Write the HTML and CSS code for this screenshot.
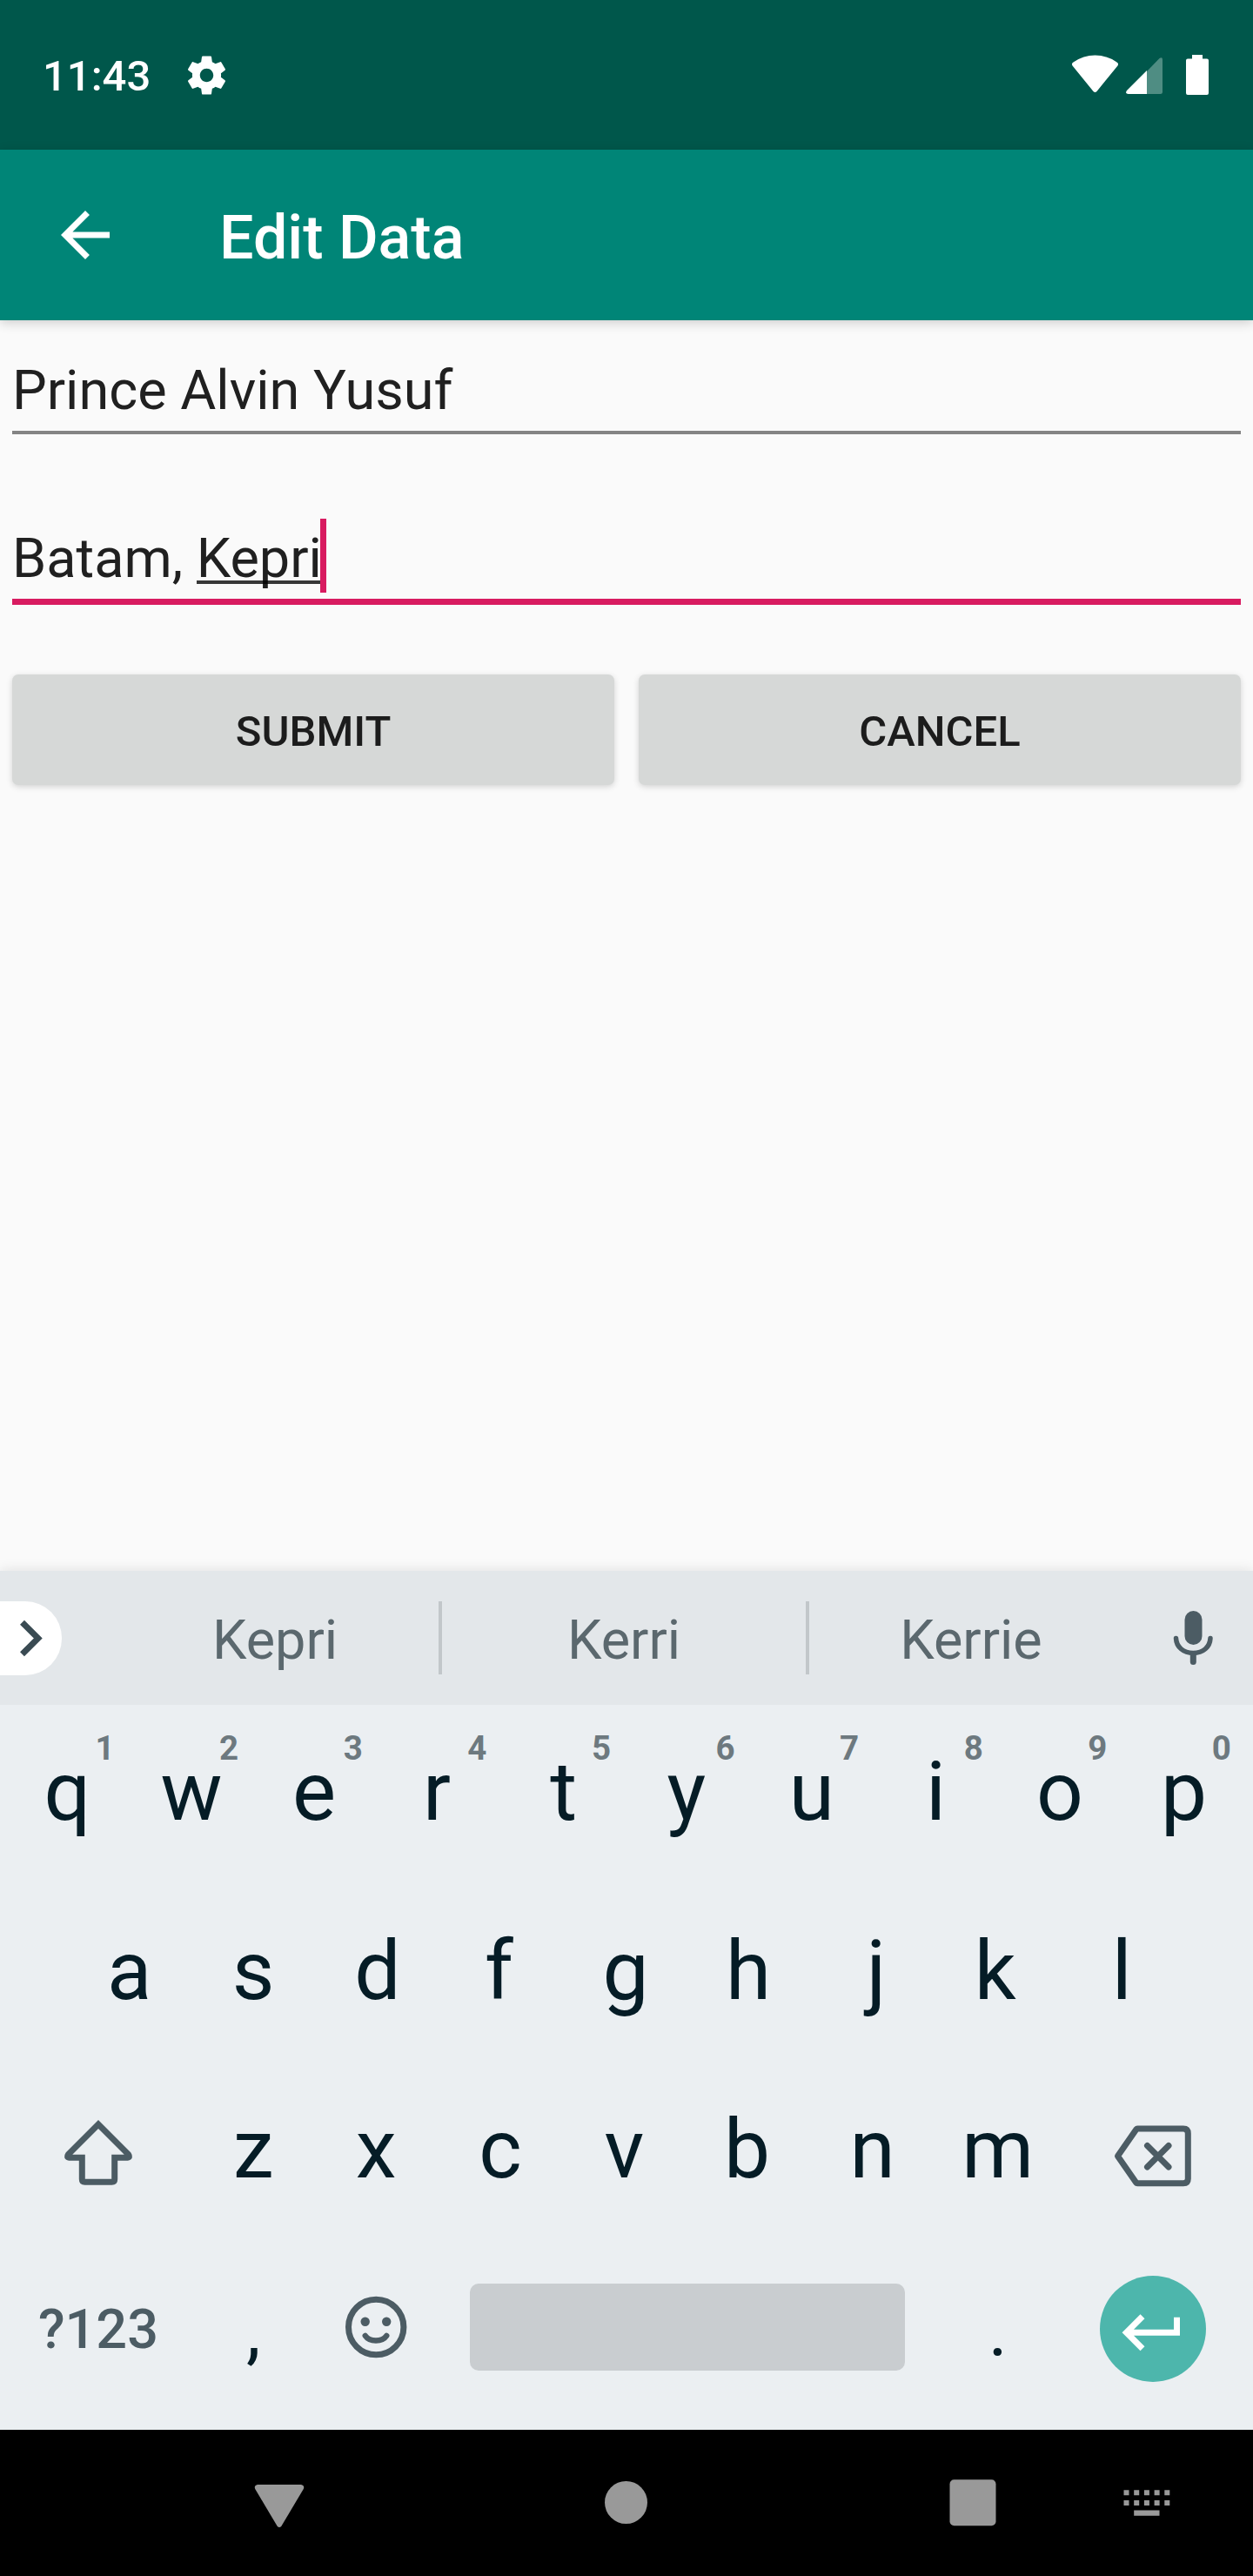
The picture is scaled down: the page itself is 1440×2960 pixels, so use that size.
FILE: index.html
```html
<!DOCTYPE html>
<html lang="en">
<head>
<meta charset="utf-8">
<title>Edit Data</title>
<link rel="stylesheet" href="styles.css">
</head>
<body>
<div class="screen">
  <header class="status">
    <span class="clock">11:43</span>
    <svg class="gear" width="53" height="53" viewBox="0 0 24 24"><path fill="#fff" d="M19.43 12.98c.04-.32.07-.64.07-.98s-.03-.66-.07-.98l2.11-1.65c.19-.15.24-.42.12-.64l-2-3.46c-.12-.22-.39-.3-.61-.22l-2.49 1c-.52-.4-1.08-.73-1.69-.98l-.38-2.65C14.46 2.18 14.25 2 14 2h-4c-.25 0-.46.18-.49.42l-.38 2.65c-.61.25-1.17.59-1.69.98l-2.49-1c-.23-.09-.49 0-.61.22l-2 3.46c-.13.22-.07.49.12.64l2.11 1.65c-.04.32-.07.65-.07.98s.03.66.07.98l-2.11 1.65c-.19.15-.24.42-.12.64l2 3.46c.12.22.39.3.61.22l2.49-1c.52.4 1.08.73 1.69.98l.38 2.65c.03.24.24.42.49.42h4c.25 0 .46-.18.49-.42l.38-2.65c.61-.25 1.17-.59 1.69-.98l2.49 1c.23.09.49 0 .61-.22l2-3.46c.12-.22.07-.49-.12-.64l-2.11-1.65zM12 15.5c-1.93 0-3.5-1.57-3.5-3.5s1.57-3.5 3.5-3.5 3.5 1.57 3.5 3.5-1.57 3.5-3.5 3.5z"/></svg>
    <svg class="system" width="160" height="48" viewBox="1231 62 160 48">
      <path fill="#fff" d="M1232.5 75.5Q1231 73 1233.5 71.500Q1245 63.5 1258.5 63.5T1283.5 71.5Q1286 73 1284.5 75.5L1260.500 105Q1258.500 107 1256.500 105Z"/>
      <path fill="#4f8d83" d="M1318 82l14.500-15q3.500-2 3.500 1.500v37q0 2.500-2.500 2.500H1318z"/>
      <path fill="#fff" d="M1318 81v27h-21.500q-4-.5-1.500-4z"/>
      <path fill="#fff" d="M1370 63h12v4.500h5q2 0 2 2V107q0 2-2 2h-22q-2 0-2-2V69.500q0-2 2-2h5z"/>
    </svg>
  </header>
  <div class="appbar">
    <svg width="84" height="84" viewBox="0 0 24 24"><path fill="#fff" d="M20 11H7.830l5.590-5.590L12 4l-8 8 8 8 1.410-1.410L7.830 13H20v-2z"/></svg>
    <h1 class="title">Edit Data</h1>
  </div>
  <main class="form">
    <div class="field">Prince Alvin Yusuf</div>
    <div class="field focused">Batam,&nbsp;<span class="composing">Kepri</span></div>
    <div class="actions">
      <button class="btn">SUBMIT</button>
      <button class="btn">CANCEL</button>
    </div>
  </main>
  <section class="keyboard">
    <div class="suggestions">
      <div class="expand"><svg width="71" height="85" viewBox="0 1839 71 85"><path fill="none" stroke="#3a4b53" stroke-width="7" d="M25.500 1863.200L43.800 1881.500 25.500 1899.800"/></svg></div>
      <span class="word first">Kepri</span>
      <span class="word middle">Kerri</span>
      <span class="word last">Kerrie</span>
      <svg class="mic" width="48" height="64" viewBox="1347 1849 48 64"><rect x="1361.500" y="1850" width="20" height="39" rx="10" fill="#4c5c64"/><path fill="none" stroke="#4c5c64" stroke-width="5.500" stroke-linecap="round" d="M1351.500 1881.500C1352 1891.500 1360 1898.500 1371.300 1898.500S1390.500 1891.500 1391 1881.500"/><path stroke="#4c5c64" stroke-width="7" stroke-linecap="round" d="M1371.300 1900v8.500"/></svg>
    </div>
    <div class="keys">
      <div class="row">
        <div class="key">q<sup>1</sup></div><div class="key">w<sup>2</sup></div><div class="key nudge">e<sup>3</sup></div><div class="key nudge-far">r<sup>4</sup></div><div class="key">t<sup>5</sup></div><div class="key nudge">y<sup>6</sup></div><div class="key">u<sup>7</sup></div><div class="key">i<sup>8</sup></div><div class="key">o<sup>9</sup></div><div class="key">p<sup>0</sup></div>
      </div>
      <div class="row inset">
        <div class="key">a</div><div class="key">s</div><div class="key">d</div><div class="key nudge-far">f</div><div class="key">g</div><div class="key nudge">h</div><div class="key nudge-right">j</div><div class="key nudge-far">k</div><div class="key">l</div>
      </div>
      <div class="row">
        <div class="key wide"><svg class="shift" width="80" height="77" viewBox="73 2435 80 77"><path fill="none" stroke="#4c5c64" stroke-width="7" d="M113 2441L78.500 2475.500Q76 2479 79.500 2479.300H94.300V2504Q94.300 2507.300 97.500 2507.300H128.500Q131.700 2507.300 131.700 2504V2479.300H146.500Q150 2479 147.500 2475.500Z"/></svg></div>
        <div class="key">z</div><div class="key nudge">x</div><div class="key nudge">c</div><div class="key nudge">v</div><div class="key nudge-far">b</div><div class="key nudge">n</div><div class="key">m</div>
        <div class="key wide"><svg class="backspace" width="90" height="72" viewBox="1279 2441 90 72"><path fill="none" stroke="#4c5c64" stroke-width="7" stroke-linejoin="round" d="M1306.500 2446H1359Q1364.300 2446 1364.300 2451.500V2503.500Q1364.300 2508.800 1359 2508.800H1306.500Q1305 2508.800 1304 2507L1283.500 2477.500 1304 2448Q1305 2446 1306.500 2446Z"/><path stroke="#4c5c64" stroke-width="7" stroke-linecap="round" d="M1317.500 2465.500l24.500 24.500M1342 2465.500l-24.500 24.500"/></svg></div>
      </div>
      <div class="row">
        <div class="key wide symbols">?123</div>
        <div class="key punct">,</div>
        <div class="key nudge"><svg class="emoji" width="72" height="72" viewBox="397 2638 72 72"><circle cx="433.200" cy="2674" r="31.700" fill="none" stroke="#4c5c64" stroke-width="7"/><circle cx="420.700" cy="2667.700" r="5.200" fill="#4c5c64"/><circle cx="445.200" cy="2667.700" r="5.200" fill="#4c5c64"/><path fill="none" stroke="#4c5c64" stroke-width="6.500" stroke-linecap="round" d="M420.800 2684Q424.500 2689.500 433 2689.500T445.200 2684"/></svg></div>
        <div class="key space"><div class="spacebar"></div></div>
        <div class="key punct">.</div>
        <div class="key wide"><svg class="enter" width="122" height="122" viewBox="1264.500 2615.300 122 122"><circle cx="1325.500" cy="2676.300" r="61" fill="#4db6ac"/><path fill="none" stroke="#fff" stroke-width="7" d="M1313.500 2662L1295 2680.500 1313.500 2699M1295 2680.500H1353V2663"/></svg></div>
      </div>
    </div>
  </section>
  <nav class="navbar">
    <svg width="1440" height="168" viewBox="0 2792 1440 168" fill="#999">
      <path d="M296 2855H346Q350.500 2856 348.800 2860L323.500 2902.500Q321 2905.500 318.500 2902.500L293.200 2860Q291.500 2856 296 2855Z"/>
      <circle cx="719.500" cy="2875.500" r="24.500"/>
      <rect x="1091.500" y="2849.300" width="53" height="53" rx="5"/>
      <path d="M1291.500 2861.300h6v6h-6zm11.700 0h6v6h-6zm11.700 0h6v6h-6zm11.700 0h6v6h-6zm11.700 0h6v6h-6zM1291.500 2873h6v6h-6zm11.700 0h6v6h-6zm11.700 0h6v6h-6zm11.700 0h6v6h-6zm11.700 0h6v6h-6zM1303.200 2884.500h29.300v6.200h-29.300z"/>
    </svg>
  </nav>
</div>
</body>
</html>
```
FILE: styles.css
```css
* { box-sizing: border-box; }
body {
  margin: 0;
  font-family: Roboto, "Liberation Sans", sans-serif;
  background: #fafafa;
}
svg { display: block; flex: none; }
.screen {
  width: 1440px;
  height: 2960px;
  display: flex;
  flex-direction: column;
  overflow: hidden;
}
.status {
  height: 172px;
  flex: none;
  display: flex;
  align-items: center;
  padding: 0 49px;
  background: #00574b;
  color: #fff;
}
.clock { font-size: 49px; font-weight: 500; line-height: 58px; padding-top: 4px; width: 162px; }
.system { margin-left: auto; }
.appbar {
  height: 196px;
  flex: none;
  display: flex;
  align-items: center;
  gap: 112px;
  padding-left: 56px;
  background: #008577;
  color: #fff;
  box-shadow: 0 3px 12px rgba(0, 0, 0, .18);
}
.title { margin: 0; padding-top: 6px; font-size: 70px; font-weight: 500; line-height: 82px; }
.form { flex: 1; padding: 0 14px; }
.field {
  height: 131px;
  padding-top: 44px;
  border-bottom: 4px solid #848484;
  font-size: 63px;
  line-height: 74px;
  color: #202020;
  display: flex;
}
.field.focused { height: 196px; padding-top: 106px; border-bottom: 7px solid #d81b60; }
.composing {
  position: relative;
  height: 74px;
}
.composing::before {
  content: "";
  position: absolute;
  left: 0;
  right: 0;
  top: 62px;
  height: 4px;
  background: rgba(0, 0, 0, .78);
}
.composing::after {
  content: "";
  position: absolute;
  right: -5px;
  top: -9px;
  width: 7px;
  height: 85px;
  background: #d81b60;
}
.actions { display: flex; gap: 28px; margin-top: 80px; }
.btn {
  flex: 1;
  height: 127px;
  border: 0;
  border-radius: 7px;
  padding: 4px 0 0;
  background: #d6d8d7;
  color: #1c1c1c;
  font: 500 49px/58px Roboto, "Liberation Sans", sans-serif;
  box-shadow: 0 2px 7px rgba(0, 0, 0, .16);
}
.keyboard { height: 987px; flex: none; background: #ebeff2; box-shadow: 0 -1px 14px rgba(0, 0, 0, .1); }
.suggestions {
  height: 154px;
  display: flex;
  align-items: center;
  background: #e3e7ea;
}
.expand { width: 128px; flex: none; }
.expand svg { background: #fff; border-radius: 0 42px 42px 0; }
.word {
  height: 84px;
  padding-top: 8px;
  text-align: center;
  font-size: 63px;
  line-height: 74px;
  color: #5b686e;
}
.first { width: 376px; }
.middle { width: 426px; border: solid #c2c7ca; border-width: 0 4px; }
.last { width: 372px; }
.mic { margin-left: 45px; }
.keys { display: flex; flex-direction: column; }
.row { height: 205.75px; display: flex; padding: 0 8px 6px 6px; }
.row.inset { padding: 0 79.3px 6px 77.3px; }
.key {
  flex: 1 1 0;
  display: flex;
  align-items: center;
  justify-content: center;
  position: relative;
  font-size: 94.5px;
  line-height: 112px;
  color: #051c26;
}
.key sup {
  position: absolute;
  right: 17px;
  top: 27px;
  font-size: 38.5px;
  font-weight: 700;
  line-height: 46px;
  color: #6d797f;
}
.nudge { margin: 0 1.5px 0 -1.5px; }
.nudge-far { margin: 0 3px 0 -3px; }
.nudge-right { margin: 0 -3px 0 3px; }
.nudge sup { right: 15.5px; }
.nudge-far sup { right: 14px; }
.wide { flex-grow: 1.5; }
.space { flex-grow: 4; }
.symbols { padding-top: 2px; font-size: 63px; font-weight: 500; color: #4c5c64; }
.punct { font-size: 84px; padding-top: 5px; }
.spacebar { width: 500px; height: 100px; margin-top: -5px; border-radius: 10px; background: #c9cdd0; }
.emoji { margin-top: -5px; }
.shift { margin-top: 6px; }
.backspace { margin-top: 14px; }
.navbar { height: 168px; flex: none; background: #000; }
```
